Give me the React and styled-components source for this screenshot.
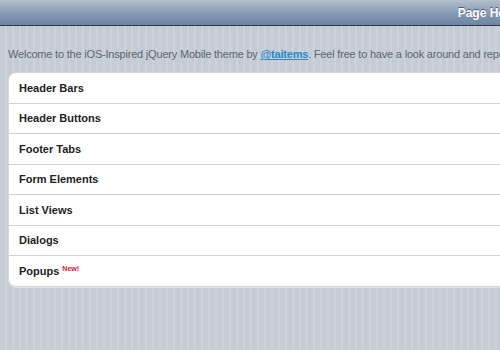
import React from "react";
import styled, { createGlobalStyle } from "styled-components";

const Global = createGlobalStyle`
  html, body { margin: 0; padding: 0; overflow: hidden; }
  body {
    font-family: "Liberation Sans", Arial, sans-serif;
    background: repeating-linear-gradient(90deg, #c5ccd4 0 5px, #cbd2d8 5px 7px);
    min-height: 350px;
  }
`;

const Page = styled.div`
  width: 988px;
  min-height: 350px;
`;

const Header = styled.header`
  height: 25px;
  background: linear-gradient(#b3bfcd, #8a9cb4 50%, #6d84a2);
  border-bottom: 1px solid #2d3642;
  display: flex;
  align-items: center;
  justify-content: center;
`;

const Title = styled.h1`
  margin: 0;
  font-size: 12px;
  font-weight: bold;
  color: #fff;
  text-shadow: 0 -1px 0 #4a5a72;
`;

const Content = styled.main`
  padding: 20px 8px;
`;

const Intro = styled.p`
  margin: 0 0 10px;
  font-size: 11px;
  letter-spacing: -0.2px;
  line-height: 16px;
  color: #60666f;
`;

const Link = styled.a`
  color: #2489ce;
  font-weight: bold;
  text-decoration: underline;
`;

const List = styled.ul`
  list-style: none;
  margin: 0;
  padding: 0;
  background: #fff;
  border: 1px solid #d3d6da;
  border-radius: 8px;
  box-shadow: 0 1px 0 rgba(255,255,255,0.4);
  overflow: hidden;
`;

const Item = styled.li`
  height: 29.5px;
  display: flex;
  align-items: center;
  padding: 0 10px;
  font-size: 11px;
  font-weight: bold;
  color: #222;
  border-top: ${(p) => (p.$first ? "none" : "1px solid #d2d2d2")};
`;

const Badge = styled.sup`
  font-size: 7px;
  color: #e0103c;
  font-weight: bold;
  margin-left: 3px;
  position: relative;
  top: -2px;
`;

const items = [
  "Header Bars",
  "Header Buttons",
  "Footer Tabs",
  "Form Elements",
  "List Views",
  "Dialogs",
  "Popups",
];

export default function App() {
  return (
    <Page>
      <Global />
      <Header>
        <Title>Page Header</Title>
      </Header>
      <Content>
        <Intro>
          Welcome to the iOS-Inspired jQuery Mobile theme by <Link href="#">@taitems</Link>. Feel free to have a look around and report any issues you find.
        </Intro>
        <List>
          {items.map((t, i) => (
            <Item key={t} $first={i === 0}>
              {t}
              {t === "Popups" && <Badge>New!</Badge>}
            </Item>
          ))}
        </List>
      </Content>
    </Page>
  );
}
